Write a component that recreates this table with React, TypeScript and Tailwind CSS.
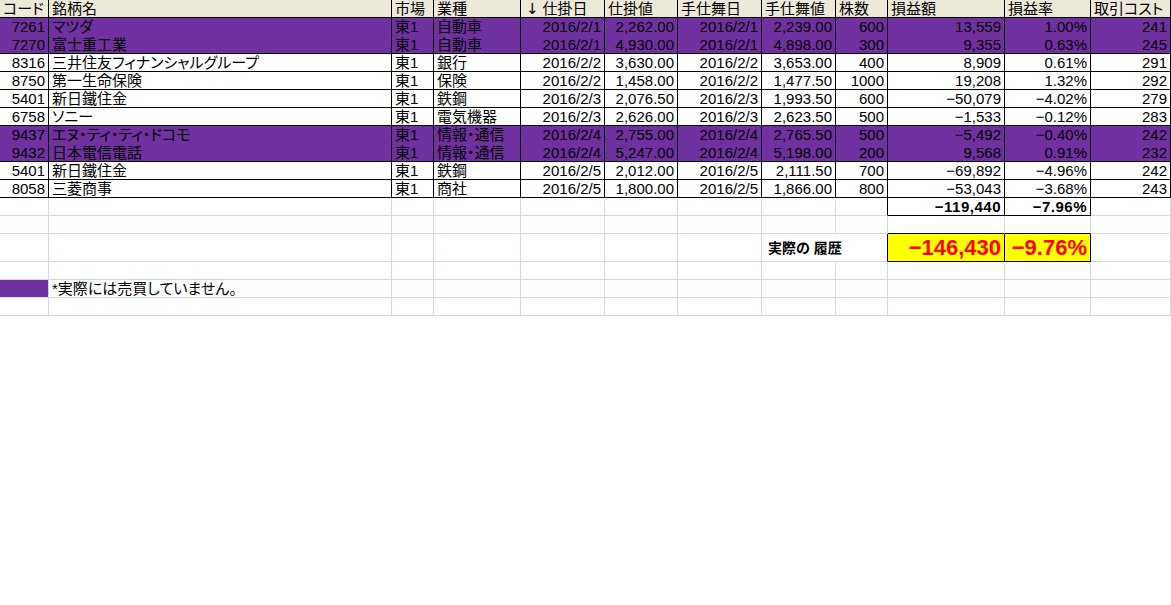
import type { ReactNode } from 'react';

const W = [49, 343, 42, 87, 84, 73, 84, 74, 52, 117, 86, 80];
const ALIGN = ['r', 'l', 'l', 'l', 'r', 'r', 'r', 'r', 'r', 'r', 'r', 'r'];

const HEAD = ['コード', '銘柄名', '市場', '業種', '仕掛日', '仕掛値', '手仕舞日', '手仕舞値', '株数', '損益額', '損益率', '取引コスト'];

type Trade = { cells: string[]; mark?: boolean; joinNext?: boolean };

const trades: Trade[] = [
  { cells: ['7261', 'マツダ', '東1', '自動車', '2016/2/1', '2,262.00', '2016/2/1', '2,239.00', '600', '13,559', '1.00%', '241'], mark: true, joinNext: true },
  { cells: ['7270', '富士重工業', '東1', '自動車', '2016/2/1', '4,930.00', '2016/2/1', '4,898.00', '300', '9,355', '0.63%', '245'], mark: true },
  { cells: ['8316', '三井住友フィナンシャルグループ', '東1', '銀行', '2016/2/2', '3,630.00', '2016/2/2', '3,653.00', '400', '8,909', '0.61%', '291'] },
  { cells: ['8750', '第一生命保険', '東1', '保険', '2016/2/2', '1,458.00', '2016/2/2', '1,477.50', '1000', '19,208', '1.32%', '292'] },
  { cells: ['5401', '新日鐵住金', '東1', '鉄鋼', '2016/2/3', '2,076.50', '2016/2/3', '1,993.50', '600', '−50,079', '−4.02%', '279'] },
  { cells: ['6758', 'ソニー', '東1', '電気機器', '2016/2/3', '2,626.00', '2016/2/3', '2,623.50', '500', '−1,533', '−0.12%', '283'] },
  { cells: ['9437', 'エヌ・ティ・ティ・ドコモ', '東1', '情報・通信', '2016/2/4', '2,755.00', '2016/2/4', '2,765.50', '500', '−5,492', '−0.40%', '242'], mark: true, joinNext: true },
  { cells: ['9432', '日本電信電話', '東1', '情報・通信', '2016/2/4', '5,247.00', '2016/2/4', '5,198.00', '200', '9,568', '0.91%', '232'], mark: true },
  { cells: ['5401', '新日鐵住金', '東1', '鉄鋼', '2016/2/5', '2,012.00', '2016/2/5', '2,111.50', '700', '−69,892', '−4.96%', '242'] },
  { cells: ['8058', '三菱商事', '東1', '商社', '2016/2/5', '1,800.00', '2016/2/5', '1,866.00', '800', '−53,043', '−3.68%', '243'] },
];

const GRID_R = 'border-r-[#d0d7e5]';
const GRID_B = 'border-b-[#d0d7e5]';

function Cell({ i, r = GRID_R, b = GRID_B, bg = '', children, className = '' }: {
  i: number; r?: string; b?: string; bg?: string; children?: ReactNode; className?: string;
}) {
  const align = ALIGN[i] === 'r' ? 'justify-end' : 'justify-start';
  return (
    <div
      style={{ width: W[i] }}
      className={`shrink-0 h-full flex items-center border-r border-b whitespace-nowrap px-[3px] ${align} ${r} ${b} ${bg} ${className}`}
    >
      {children}
    </div>
  );
}

function BlankRow({ h = 'h-[18px]' }: { h?: string }) {
  return (
    <div className={`flex ${h}`}>
      {W.map((_, i) => <Cell key={i} i={i} />)}
    </div>
  );
}

export default function App() {
  return (
    <div className="w-[1171px] h-[605px] bg-white text-black text-[15px] leading-[18px] font-['Liberation_Sans','Noto_Sans_CJK_JP',sans-serif] [font-feature-settings:'palt'] overflow-hidden">
      {/* header */}
      <div className="flex h-[18px] bg-[#ece9d8]">
        {HEAD.map((h, i) => (
          <Cell key={i} i={i} r="border-r-black" b="border-b-black" className="!justify-start">
            {i === 4 && <span className="font-['DejaVu_Sans',sans-serif] leading-[18px] ml-[2px] mr-[4px]">↓</span>}
            {h}
          </Cell>
        ))}
      </div>

      {trades.map((t, ri) => (
        <div key={ri} className={`flex h-[18px] ${t.mark ? 'bg-[#7030a0]' : ''}`}>
          {t.cells.map((c, i) => (
            <Cell key={i} i={i} r="border-r-black" b={t.joinNext ? 'border-b-[#7030a0]' : 'border-b-black'}>{c}</Cell>
          ))}
        </div>
      ))}

      {/* subtotal */}
      <div className="flex h-[18px]">
        {W.map((_, i) => {
          if (i === 8) return <Cell key={i} i={i} r="border-r-black" />;
          if (i === 9) return <Cell key={i} i={i} r="border-r-black" b="border-b-black" className="font-bold tracking-[0.5px]">−119,440</Cell>;
          if (i === 10) return <Cell key={i} i={i} r="border-r-black" b="border-b-black" className="font-bold tracking-[0.5px]">−7.96%</Cell>;
          return <Cell key={i} i={i} />;
        })}
      </div>

      <div className="flex h-[18px]">
        {W.map((_, i) => (
          <Cell key={i} i={i} b={i === 9 || i === 10 ? 'border-b-black' : GRID_B} />
        ))}
      </div>

      {/* actual history */}
      <div className="flex h-[28px]">
        {W.map((_, i) => {
          if (i === 7) return <Cell key={i} i={i} r="border-r-white" className="!justify-start pl-[6px] font-bold text-[14px]">実際の 履歴</Cell>;
          if (i === 8) return <Cell key={i} i={i} r="border-r-black" />;
          if (i === 9) return <Cell key={i} i={i} r="border-r-black" b="border-b-black" bg="bg-[#ffff00]" className="text-[#ff0000] font-bold text-[22px]">−146,430</Cell>;
          if (i === 10) return <Cell key={i} i={i} r="border-r-black" b="border-b-black" bg="bg-[#ffff00]" className="text-[#ff0000] font-bold text-[22px]">−9.76%</Cell>;
          return <Cell key={i} i={i} />;
        })}
      </div>

      <BlankRow />

      {/* note */}
      <div className="flex h-[18px]">
        {W.map((_, i) => {
          if (i === 0) return <Cell key={i} i={i} bg="bg-[#7030a0]" />;
          if (i === 1) return <Cell key={i} i={i}>*実際には売買していません。</Cell>;
          return <Cell key={i} i={i} />;
        })}
      </div>

      <BlankRow />
    </div>
  );
}
